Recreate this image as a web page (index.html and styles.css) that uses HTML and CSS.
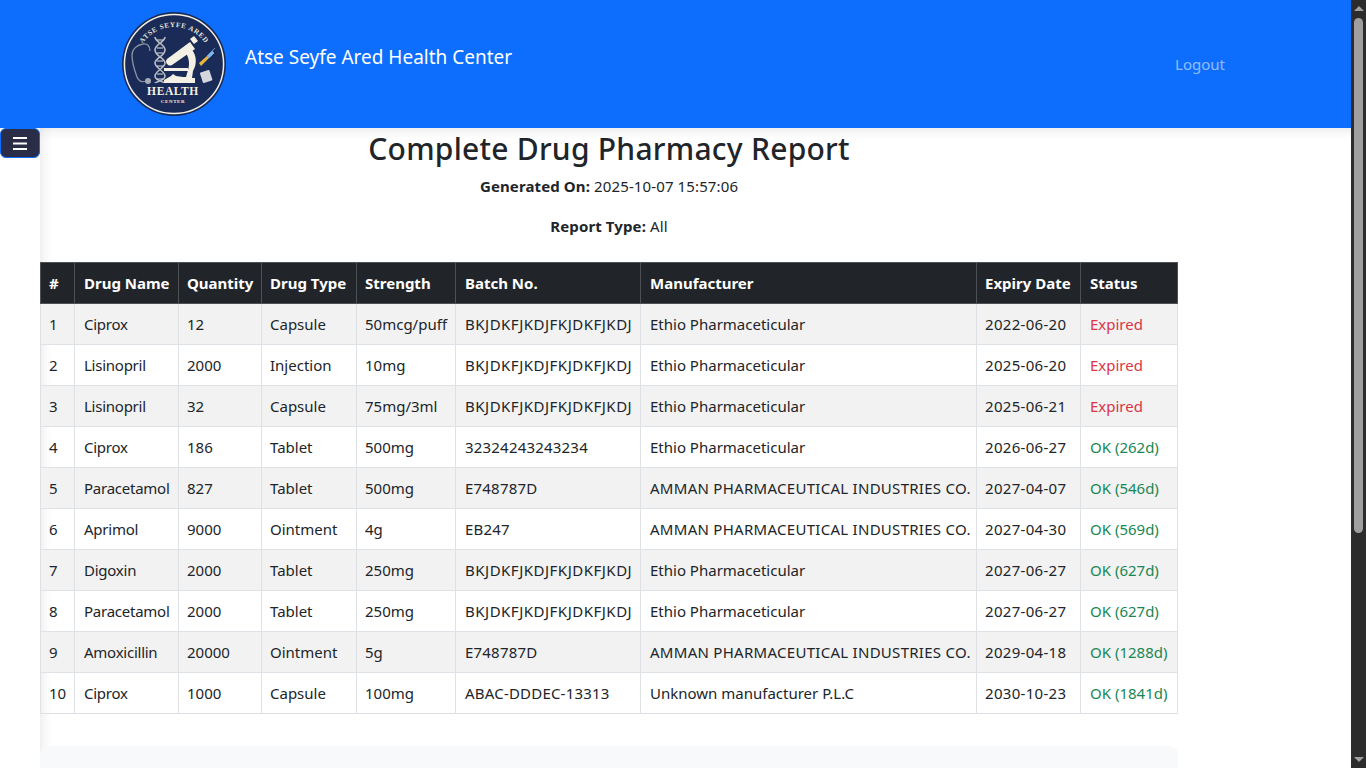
FILE: index.html
```html
<!DOCTYPE html>
<html lang="en">
<head>
  <meta charset="UTF-8">
  <meta name="viewport" content="width=device-width, initial-scale=1.0">
  <title>Complete Drug Pharmacy Report</title>
  <link rel="stylesheet" href="styles.css">
</head>
<body>
  <header class="topbar">
    <a class="brand" href="#">
      <svg class="logo" viewBox="0 0 104 104" aria-label="Atse Seyfe Ared Health Center">
        <circle cx="52" cy="52" r="52" fill="#1a2b57"/>
        <circle cx="52" cy="52" r="49.6" fill="none" stroke="#f2efe4" stroke-width="1.5"/>
        <defs><path id="logoArc" d="M14 53a38 38 0 0 1 76 0"/></defs>
        <text class="logo-arc"><textPath href="#logoArc" startOffset="50%" text-anchor="middle">ATSE SEYFE ARED</textPath></text>
        <!-- dna -->
        <path d="M33 25C33 30 43 32 43 38S33 46 33 51 43 59 43 64 33 70 33 71M43 25C43 30 33 32 33 38S43 46 43 51 33 59 33 64 43 70 43 71" fill="none" stroke="#b9bdc4" stroke-width="1.6"/>
        <path d="M35 28h6M35 36h6M35 41h6M35 49h6M35 54h6M35 62h6M35 67h6" stroke="#dcdde1" stroke-width="1"/>
        <!-- stethoscope -->
        <path d="M28 39c0-5-3-8-7-7-6 1-11 5-11 11 0 9 3 16 5 22 2 5 6 5 9 4" fill="none" stroke="#8b93a5" stroke-width="1.3"/>
        <circle cx="26" cy="69" r="3" fill="#a6abb5"/>
        <!-- microscope -->
        <path d="M45 47l23-17 5 7-23 16a4 4 0 0 1-5-6z" fill="#f4f1e4"/>
        <path d="M68 27l4-3 4 5-4 3z" fill="#f4f1e4"/>
        <path d="M66 38c3-1 5 0 6 3 3 6 2 13-1 18l-1 7h3v5H42v-3l7-4 2-2 3 2 7 1h3l2-7c2-6 1-12-2-17z" fill="#f4f1e4"/>
        <path d="M42 56h24v3H42z" fill="#f4f1e4"/>
        <!-- syringe and pills -->
        <path d="M77 51l8-7 2 2-8 8z" fill="#e7b53c"/>
        <path d="M85 44l5-5 2 2-5 5zM90 39l3-3" fill="#7fb4e6" stroke="#7fb4e6" stroke-width=".8"/>
        <rect x="79" y="59" width="10" height="11" rx="1" fill="#d5d7dc" transform="rotate(-18 84 64)"/>
        <text class="logo-health" x="51" y="83">HEALTH</text>
        <text class="logo-center" x="51" y="91">CENTER</text>
      </svg>
      <span class="brand-name">Atse Seyfe Ared Health Center</span>
    </a>
    <a class="logout" href="#">Logout</a>
  </header>

  <button class="sidebar-toggle" aria-label="Toggle sidebar">
    <svg viewBox="0 0 14 14" width="14" height="14"><path d="M0 2h14M0 7.5h14M0 13h14" stroke="#fff" stroke-width="2"/></svg>
  </button>

  <main class="content">
    <h2 class="report-title">Complete Drug Pharmacy Report</h2>
    <p class="meta"><strong>Generated On:</strong> 2025-10-07 15:57:06</p>
    <p class="meta"><strong>Report Type:</strong> All</p>

    <table class="report">
      <colgroup>
        <col class="col-num"><col class="col-name"><col class="col-qty"><col class="col-type"><col class="col-strength"><col class="col-batch"><col class="col-maker"><col class="col-expiry"><col class="col-status">
      </colgroup>
      <thead>
        <tr>
          <th>#</th><th>Drug Name</th><th>Quantity</th><th>Drug Type</th><th>Strength</th><th>Batch No.</th><th>Manufacturer</th><th>Expiry Date</th><th>Status</th>
        </tr>
      </thead>
      <tbody>
        <tr><td>1</td><td>Ciprox</td><td>12</td><td>Capsule</td><td>50mcg/puff</td><td class="long">BKJDKFJKDJFKJDKFJKDJ</td><td>Ethio Pharmaceticular</td><td>2022-06-20</td><td class="expired">Expired</td></tr>
        <tr><td>2</td><td>Lisinopril</td><td>2000</td><td>Injection</td><td>10mg</td><td class="long">BKJDKFJKDJFKJDKFJKDJ</td><td>Ethio Pharmaceticular</td><td>2025-06-20</td><td class="expired">Expired</td></tr>
        <tr><td>3</td><td>Lisinopril</td><td>32</td><td>Capsule</td><td>75mg/3ml</td><td class="long">BKJDKFJKDJFKJDKFJKDJ</td><td>Ethio Pharmaceticular</td><td>2025-06-21</td><td class="expired">Expired</td></tr>
        <tr><td>4</td><td>Ciprox</td><td>186</td><td>Tablet</td><td>500mg</td><td>32324243243234</td><td>Ethio Pharmaceticular</td><td>2026-06-27</td><td class="ok">OK (262d)</td></tr>
        <tr><td>5</td><td>Paracetamol</td><td>827</td><td>Tablet</td><td>500mg</td><td>E748787D</td><td class="caps">AMMAN PHARMACEUTICAL INDUSTRIES CO.</td><td>2027-04-07</td><td class="ok">OK (546d)</td></tr>
        <tr><td>6</td><td>Aprimol</td><td>9000</td><td>Ointment</td><td>4g</td><td>EB247</td><td class="caps">AMMAN PHARMACEUTICAL INDUSTRIES CO.</td><td>2027-04-30</td><td class="ok">OK (569d)</td></tr>
        <tr><td>7</td><td>Digoxin</td><td>2000</td><td>Tablet</td><td>250mg</td><td class="long">BKJDKFJKDJFKJDKFJKDJ</td><td>Ethio Pharmaceticular</td><td>2027-06-27</td><td class="ok">OK (627d)</td></tr>
        <tr><td>8</td><td>Paracetamol</td><td>2000</td><td>Tablet</td><td>250mg</td><td class="long">BKJDKFJKDJFKJDKFJKDJ</td><td>Ethio Pharmaceticular</td><td>2027-06-27</td><td class="ok">OK (627d)</td></tr>
        <tr><td>9</td><td>Amoxicillin</td><td>20000</td><td>Ointment</td><td>5g</td><td>E748787D</td><td class="caps">AMMAN PHARMACEUTICAL INDUSTRIES CO.</td><td>2029-04-18</td><td class="ok">OK (1288d)</td></tr>
        <tr><td>10</td><td>Ciprox</td><td>1000</td><td>Capsule</td><td>100mg</td><td>ABAC-DDDEC-13313</td><td>Unknown manufacturer P.L.C</td><td>2030-10-23</td><td class="ok">OK (1841d)</td></tr>
      </tbody>
    </table>

    <div class="summary"></div>
  </main>

  <div class="scrollbar">
    <span class="arrow-up"></span>
    <span class="thumb"></span>
    <span class="arrow-down"></span>
  </div>
</body>
</html>
```

FILE: styles.css
```css
html, body { height: 100%; overflow: hidden; }
body { margin: 0; font-family: "Noto Sans", "Open Sans", sans-serif; font-size: 15px; color: #212529; background: #fff; }
a { text-decoration: none; }

.topbar { height: 128px; background: #0d6efd; display: flex; align-items: center; justify-content: space-between; box-sizing: border-box; padding: 0 141px 0 122px; }
.brand { display: flex; align-items: center; color: #fff; }
.logo { width: 104px; height: 104px; display: block; }
.brand-name { font-size: 19px; margin-left: 19px; margin-bottom: 14px; }
.logout { color: rgba(255,255,255,.55); font-size: 15px; margin-top: -1px; }
.logo-arc { font-family: "Liberation Serif", serif; font-size: 7px; font-weight: bold; fill: #e8e6dc; letter-spacing: .7px; }
.logo-health { font-family: "Liberation Serif", serif; font-size: 11.5px; font-weight: bold; fill: #f4f1e4; text-anchor: middle; letter-spacing: .6px; }
.logo-center { font-family: "Liberation Serif", serif; font-size: 5px; font-weight: bold; fill: #f4f1e4; text-anchor: middle; letter-spacing: .6px; }

.sidebar-toggle { position: fixed; top: 128px; left: 0; width: 40px; height: 30px; padding: 0; background: #2a2d47; border: 1px solid #0d6efd; border-radius: 6px; display: flex; align-items: center; justify-content: center; }

.content { margin-left: 40px; height: 640px; box-sizing: border-box; padding-right: 188px; box-shadow: inset 14px 0 14px -14px rgba(0,0,0,.12), inset 0 14px 14px -14px rgba(0,0,0,.12); }
.report-title { margin: 0; padding-top: 2px; font-size: 30px; font-weight: 500; line-height: 38px; letter-spacing: .25px; text-align: center; }
.meta { margin: 0 0 16px; line-height: 24px; letter-spacing: .12px; text-align: center; }
.meta strong { font-weight: bold; }
.meta:first-of-type { margin-top: 6px; }

.report { width: 1137px; table-layout: fixed; border-collapse: collapse; margin-top: 24px; }
.col-num { width: 34px; }
.col-name { width: 104px; }
.col-qty { width: 83px; }
.col-type { width: 95px; }
.col-strength { width: 99px; }
.col-batch { width: 185px; }
.col-maker { width: 336px; }
.col-expiry { width: 104px; }
.col-status { width: 97px; }
.report th, .report td { border: 1px solid #dee2e6; padding: 8px; text-align: left; line-height: 24px; white-space: nowrap; }
.report th { background: #212529; color: #fff; border-color: #4d5154; font-weight: bold; }
.report th:nth-child(2), .report td:nth-child(2),
.report th:nth-child(6), .report td:nth-child(6),
.report th:nth-child(7), .report td:nth-child(7),
.report th:nth-child(9), .report td:nth-child(9) { padding-left: 9px; }
.report td:nth-child(2) { letter-spacing: -.25px; }
.report td:nth-child(6) { letter-spacing: .2px; }
.report td:nth-child(8) { letter-spacing: .3px; }
.report td.long { letter-spacing: .5px; }
.report td.caps { letter-spacing: .28px; }
.report tbody tr:nth-child(odd) td { background: #f2f2f2; }
.expired { color: #dc3545; }
.ok { color: #198754; }

.summary { height: 200px; margin-top: 32px; background: #f8f9fa; border-radius: 8px; }

.scrollbar { position: fixed; top: 0; right: 0; bottom: 0; width: 15px; background: #2c2c2c; display: flex; flex-direction: column; align-items: center; }
.arrow-up { margin-top: 6px; border: 5px solid transparent; border-top: 0; border-bottom-color: #9f9f9f; }
.thumb { width: 9px; height: 515px; margin-top: 7px; background: #9f9f9f; border-radius: 5px; }
.arrow-down { margin-top: auto; margin-bottom: 6px; border: 5px solid transparent; border-bottom: 0; border-top-color: #9f9f9f; }
```
